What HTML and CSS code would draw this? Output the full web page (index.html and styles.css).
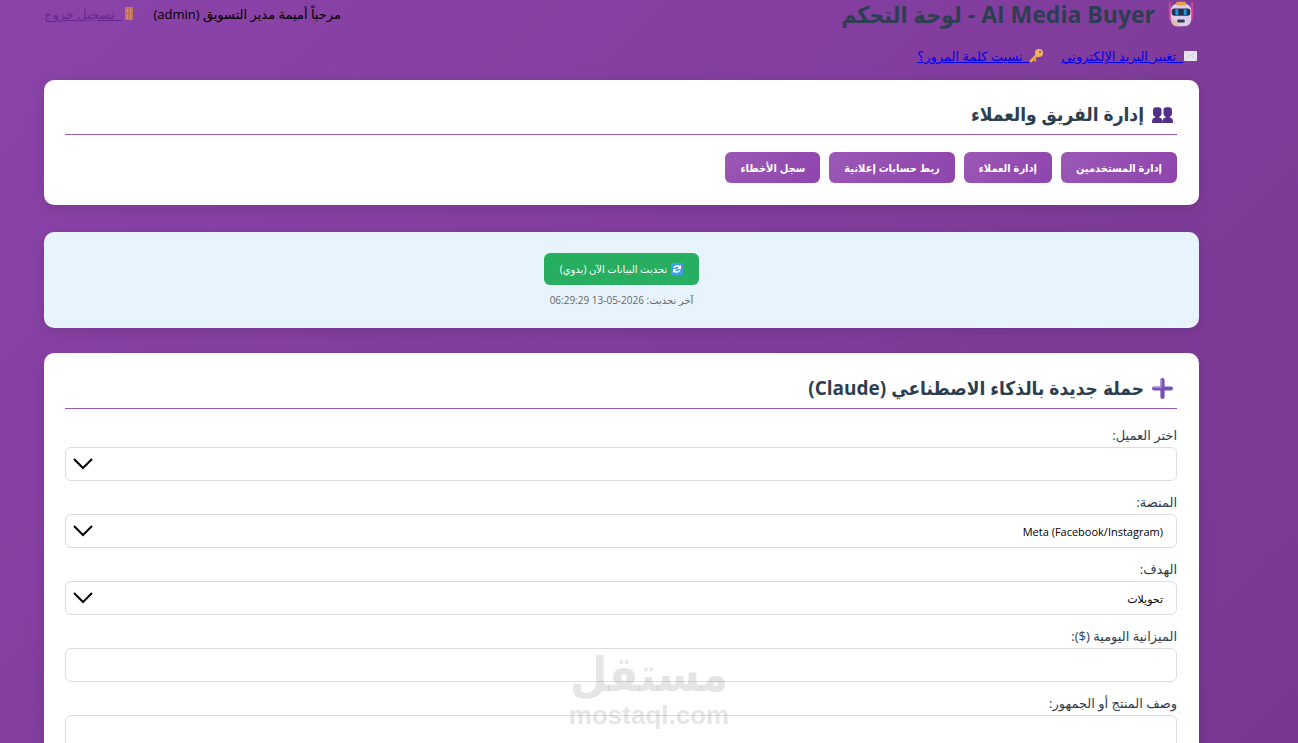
FILE: index.html
```
<!DOCTYPE html>
<html lang="ar" dir="rtl">
<head>
<meta charset="UTF-8">
<meta name="viewport" content="width=device-width, initial-scale=1.0">
<title>AI Media Buyer - لوحة التحكم</title>
<link rel="stylesheet" href="styles.css">
</head>
<body>
<div class="container">
    <!-- Header -->
    <header class="header">
        <h1>
            <svg class="icon-robot" viewBox="0 0 30 30" aria-hidden="true">
                <path d="M3 3v17M27 3v17" stroke="#d9479b" stroke-width="2" stroke-linecap="round"/>
                <rect x="2" y="11" width="4" height="9" rx="2" fill="#c83f91"/>
                <rect x="24" y="11" width="4" height="9" rx="2" fill="#c83f91"/>
                <rect x="4" y="4" width="22" height="24" rx="7" fill="#dccdeb"/>
                <rect x="10" y="2" width="10" height="4" rx="1" fill="#e8a04e"/>
                <path d="M5 18c3 6 6 7 9 10h-4c-4 0-6-4-5-10z" fill="#e3b8a0"/>
                <rect x="5" y="9" width="20" height="8" rx="3" fill="#28304f"/>
                <rect x="9" y="10" width="3" height="6" rx="1" fill="#2598dd"/>
                <rect x="18" y="10" width="3" height="6" rx="1" fill="#2598dd"/>
                <rect x="11" y="21" width="8" height="3" rx="1" fill="#37364f"/>
            </svg>
            AI Media Buyer - لوحة التحكم
        </h1>
        <div class="user-info">
            <span>مرحباً أميمة مدير التسويق (admin)</span>
            <a class="logout" href="#"><svg class="icon-door" viewBox="0 0 16 16" aria-hidden="true"><rect x="4" y="1" width="8" height="13" fill="#dc8a35"/><path d="M6 3h1v4H6zM9 3h1v4H9zM6 9h1v4H6zM9 9h1v4H9z" fill="#f0b878"/></svg>&nbsp; تسجيل خروج</a>
        </div>
    </header>

    <nav class="links">
        <a href="#"><svg class="icon-small" viewBox="0 0 16 16" aria-hidden="true"><rect x="1" y="3" width="13" height="10" fill="#e9e6ee"/><path d="M1 3l6 5 7-5M1 13l5-5M14 13l-5-5" fill="none" stroke="#d2ced8"/></svg>&nbsp; تغيير البريد الإلكتروني</a>
        <a href="#"><svg class="icon-small" viewBox="0 0 16 16" aria-hidden="true"><path d="M8 7l-6 6" stroke="#eaa650" stroke-width="3" stroke-linecap="round"/><path d="M5 11l2 2" stroke="#eaa650" stroke-width="2"/><circle cx="10" cy="5" r="4" fill="#f0b35e"/><circle cx="11" cy="4" r="1" fill="#7c3f91"/></svg>&nbsp; نسيت كلمة المرور؟</a>
    </nav>

    <!-- Team -->
    <section class="card team">
        <h2>
            <svg class="icon" viewBox="0 0 20 20" aria-hidden="true">
                <g fill="#533087">
                    <rect x="1" y="3" width="8" height="9" rx="3"/>
                    <rect x="11" y="3" width="8" height="9" rx="3"/>
                    <path d="M3 11h4v2c2 0 3 1 3 5H0c0-4 1-5 3-5zM13 11h4v2c2 0 3 1 3 5H10c0-4 1-5 3-5z"/>
                </g>
            </svg>
            إدارة الفريق والعملاء
        </h2>
        <div class="buttons">
            <button type="button" class="btn">إدارة المستخدمين</button>
            <button type="button" class="btn">إدارة العملاء</button>
            <button type="button" class="btn">ربط حسابات إعلانية</button>
            <button type="button" class="btn">سجل الأخطاء</button>
        </div>
    </section>

    <!-- Manual refresh -->
    <section class="card refresh">
        <button type="button" class="btn-refresh">
            <svg class="icon-refresh" viewBox="0 0 12 12" aria-hidden="true"><rect width="12" height="12" rx="1" fill="#429fe5"/><path d="M3 5c1-2 4-3 6-1M9 7c-1 2-4 3-6 1" fill="none" stroke="#fff" stroke-width="1.5"/><path d="M10 2v4H6zM2 10V6h4z" fill="#fff"/></svg>
            تحديث البيانات الآن (يدوي)
        </button>
        <p class="last-update">آخر تحديث: <bdi dir="ltr">06:29:29 13-05-2026</bdi></p>
    </section>

    <!-- New campaign -->
    <section class="card campaign">
        <h2>
            <svg class="icon" viewBox="0 0 20 20" aria-hidden="true"><path d="M10 2v16M2 10h16" stroke="#7750b5" stroke-width="4" stroke-linecap="round"/><path d="M9 2v7H2" fill="none" stroke="#a58ad6" stroke-linecap="round"/></svg>
            حملة جديدة بالذكاء الاصطناعي (Claude)
        </h2>
        <form>
            <label for="client">اختر العميل:</label>
            <select id="client"><option></option></select>

            <label for="platform">المنصة:</label>
            <select id="platform"><option>Meta (Facebook/Instagram)</option></select>

            <label for="goal">الهدف:</label>
            <select id="goal"><option>تحويلات</option></select>

            <label for="budget">الميزانية اليومية ($):</label>
            <input type="text" id="budget">

            <label for="description">وصف المنتج أو الجمهور:</label>
            <textarea id="description" rows="3"></textarea>
        </form>
    </section>

    <div class="watermark">
        <span class="watermark-name">مستقل</span>
        <span class="watermark-site" dir="ltr">mostaql.com</span>
    </div>
</div>
</body>
</html>
```

FILE: styles.css
```
* {
    box-sizing: border-box;
}

html {
    overflow-x: hidden;
    scrollbar-width: none;
}

body {
    margin: 0;
    padding: 0 99px 20px 44px;
    min-height: 100vh;
    font-family: "Open Sans", "DejaVu Sans", sans-serif;
    font-size: 13px;
    color: #000;
    background: linear-gradient(135deg, #8b43a9, #783892) fixed;
}

h1, h2 {
    margin: 0;
    color: #2c3e50;
    font-family: "Open Sans", "DejaVu Sans Condensed", "DejaVu Sans", sans-serif;
    font-weight: bold;
}

h1 {
    display: flex;
    align-items: center;
    gap: 12px;
    padding-right: 4px;
    font-size: 23px;
    line-height: 26px;
}

h2 {
    display: flex;
    align-items: center;
    gap: 8px;
    padding: 0 4px 6px 0;
    font-size: 19px;
    line-height: 28px;
    border-bottom: 1px solid #9b59b6;
}

.header {
    display: flex;
    justify-content: space-between;
    align-items: center;
}

.user-info {
    display: flex;
    gap: 16px;
}

.logout {
    color: #551a8b;
    opacity: 0.7;
}

.links {
    display: flex;
    gap: 16px;
    padding: 18px 0 14px;
    line-height: 20px;
}

.links a {
    color: #0000ee;
}

.icon-robot {
    width: 28px;
    height: 28px;
}

.icon {
    width: 21px;
    height: 21px;
}

.icon-small, .icon-door {
    width: 16px;
    height: 16px;
    vertical-align: -3px;
}

.card {
    margin-bottom: 27px;
    padding: 20px 22px 20px 21px;
    border-radius: 10px;
    background: #fff;
    box-shadow: 0 4px 15px rgba(0, 0, 0, 0.12);
}

.buttons {
    display: flex;
    flex-wrap: wrap;
    gap: 9px;
    padding: 17px 0 2px;
}

.btn {
    height: 31px;
    padding: 0 15px;
    border: 0;
    border-radius: 6px;
    color: #fff;
    font: bold 11px "Open Sans", "DejaVu Sans Condensed", "DejaVu Sans", sans-serif;
    background: linear-gradient(135deg, #9b59b6, #8e44ad);
}

.refresh {
    margin-bottom: 25px;
    padding: 21px 21px 20px;
    text-align: center;
    background: #e8f4fd;
}

.btn-refresh {
    display: inline-flex;
    align-items: center;
    gap: 4px;
    height: 32px;
    padding: 0 16px;
    border: 0;
    border-radius: 6px;
    color: #fff;
    font: 10px "Open Sans", "DejaVu Sans", sans-serif;
    background: #27ae60;
}

.icon-refresh {
    width: 12px;
    height: 12px;
}

.last-update {
    margin: 8px 0 0;
    color: #666;
    font-size: 10px;
    line-height: 15px;
}

.campaign {
    padding-top: 21px;
}

form {
    display: flex;
    flex-direction: column;
    padding-top: 16px;
}

label {
    padding-bottom: 2px;
    color: #2c3e50;
    line-height: 20px;
}

select, input, textarea {
    width: 100%;
    height: 34px;
    margin-bottom: 11px;
    padding: 0 13px;
    border: 1px solid #ddd;
    border-radius: 6px;
    color: #000;
    font: 11px "Open Sans", "DejaVu Sans", sans-serif;
    background: #fff;
}

select {
    appearance: none;
    background: #fff url("data:image/svg+xml,%3Csvg xmlns='http://www.w3.org/2000/svg' width='20' height='12'%3E%3Cpath d='M1 1l9 9 9-9' fill='none' stroke='%23000' stroke-width='2'/%3E%3C/svg%3E") no-repeat 7px center;
}

textarea {
    height: 80px;
}

/* Site mark over the form */
.watermark {
    position: fixed;
    bottom: 15px;
    left: 50%;
    display: flex;
    flex-direction: column;
    align-items: center;
    transform: translateX(-50%);
    color: rgba(150, 150, 150, 0.25);
    font-weight: bold;
    pointer-events: none;
}

.watermark-name {
    font-family: "DejaVu Sans Condensed", "DejaVu Sans", sans-serif;
    font-size: 48px;
    line-height: 56px;
}

.watermark-site {
    font-family: "Liberation Sans", sans-serif;
    font-size: 26px;
    line-height: 26px;
}
```
